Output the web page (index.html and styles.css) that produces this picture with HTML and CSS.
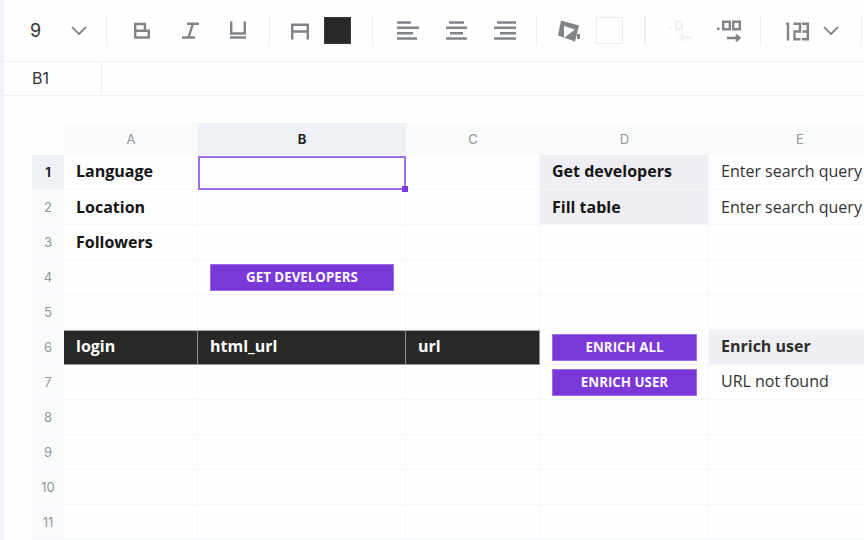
FILE: index.html
```html
<!DOCTYPE html>
<html lang="en">
<head>
<meta charset="utf-8">
<title>Spreadsheet</title>
<link rel="stylesheet" href="styles.css">
</head>
<body>
<main class="app">
  <header class="toolbar">
    <div class="group g-size">
      <span class="size">9</span>
      <svg class="chev" width="16" height="10" viewBox="0 0 16 10"><path d="M1 1l7 7 7-7"/></svg>
    </div>
    <div class="group g-format">
      <svg class="ico" width="20" height="20" viewBox="0 0 20 20"><path d="M3.2 3H13V9.7H3.2zM3.2 9.7H16.8V16.5H3.2z"/></svg>
      <svg class="ico" width="20" height="20" viewBox="0 0 20 20"><path d="M7 2.7H19M2 16.5H15M13 2.7L8.5 16.5"/></svg>
      <svg class="ico" width="20" height="20" viewBox="0 0 20 20"><path d="M3.2 0.5V12.5H16.8V0.5M2 16.5H18"/></svg>
    </div>
    <div class="group g-color">
      <svg class="ico" width="20" height="20" viewBox="0 0 20 20"><path d="M2.2 18.5V3.7H17.8V18.5M2.2 10.5H17.8"/></svg>
      <span class="swatch dark"></span>
    </div>
    <div class="group g-align">
      <svg class="ico" width="22" height="22" viewBox="0 0 22 22"><path d="M0 2.5H14M0 7.8H22M0 13.2H16M0 18.5H20"/></svg>
      <svg class="ico" width="22" height="22" viewBox="0 0 22 22"><path d="M3 2.5H18M0 7.8H21M4 13.2H17M0 18.5H21"/></svg>
      <svg class="ico" width="22" height="22" viewBox="0 0 22 22"><path d="M3 2.5H22M0 7.8H22M6 13.2H22M0 18.5H22"/></svg>
    </div>
    <div class="group g-fill">
      <svg class="ico solid" width="24" height="24" viewBox="0 0 24 24"><path d="M3 1.5L21 6.5L17 22.5L0 16.5z"/><path class="cut" d="M6 7L17 10.5L6 19z"/><path d="M19 15H22V20H19z"/></svg>
      <span class="swatch blank"></span>
    </div>
    <div class="group g-dec">
      <svg class="ico faint" width="24" height="24" viewBox="0 0 24 24"><path class="solid-dot" d="M0.5 8.5H3V11H0.5z"/><path d="M8.2 2.7H13.8V10.3H8.2zM23 18.5H12M15.5 15L12 18.5L15.5 22"/></svg>
      <svg class="ico" width="24" height="24" viewBox="0 0 24 24"><path class="solid-dot" d="M0 8.5H2.5V11H0z"/><path d="M6.2 2.7H12.8V10.3H6.2zM16.2 2.7H22.8V10.3H16.2zM10 19H22M19 16L22.5 19L19 22"/></svg>
    </div>
    <div class="group g-num">
      <svg class="ico" width="24" height="22" viewBox="0 0 24 22"><path d="M1 3.7H3.5M3 2.5V20.5M8.5 3.7H15V11.5H9.5V19.3H15.5M17 3.7H22.8V19.3H17M17.5 11.5H22.8"/></svg>
      <svg class="chev" width="16" height="10" viewBox="0 0 16 10"><path d="M1 1l7 7 7-7"/></svg>
    </div>
    <div class="group g-end"></div>
  </header>

  <div class="formula">
    <div class="namebox">B1</div>
    <div class="formula-input"></div>
  </div>

  <section class="sheet">
    <div class="grid">
      <div class="corner"></div>
      <div class="colh">A</div>
      <div class="colh active">B</div>
      <div class="colh">C</div>
      <div class="colh">D</div>
      <div class="colh">E</div>

      <div class="rowh active">1</div>
      <div class="cell b">Language</div>
      <div class="cell selected"><span class="handle"></span></div>
      <div class="cell"></div>
      <div class="cell b tint">Get developers</div>
      <div class="cell">Enter search query</div>

      <div class="rowh">2</div>
      <div class="cell b low">Location</div>
      <div class="cell"></div>
      <div class="cell"></div>
      <div class="cell b tint low">Fill table</div>
      <div class="cell low">Enter search query</div>

      <div class="rowh">3</div>
      <div class="cell b low">Followers</div>
      <div class="cell"></div>
      <div class="cell"></div>
      <div class="cell"></div>
      <div class="cell"></div>

      <div class="rowh">4</div>
      <div class="cell"></div>
      <div class="cell has-btn"><button class="btn">GET DEVELOPERS</button></div>
      <div class="cell"></div>
      <div class="cell"></div>
      <div class="cell"></div>

      <div class="rowh">5</div>
      <div class="cell"></div>
      <div class="cell"></div>
      <div class="cell"></div>
      <div class="cell"></div>
      <div class="cell"></div>

      <div class="rowh">6</div>
      <div class="cell b dark">login</div>
      <div class="cell b dark">html_url</div>
      <div class="cell b dark">url</div>
      <div class="cell has-btn"><button class="btn">ENRICH ALL</button></div>
      <div class="cell b tint soft">Enrich user</div>

      <div class="rowh">7</div>
      <div class="cell"></div>
      <div class="cell"></div>
      <div class="cell"></div>
      <div class="cell has-btn"><button class="btn">ENRICH USER</button></div>
      <div class="cell">URL not found</div>

      <div class="rowh">8</div>
      <div class="cell"></div><div class="cell"></div><div class="cell"></div><div class="cell"></div><div class="cell"></div>
      <div class="rowh">9</div>
      <div class="cell"></div><div class="cell"></div><div class="cell"></div><div class="cell"></div><div class="cell"></div>
      <div class="rowh">10</div>
      <div class="cell"></div><div class="cell"></div><div class="cell"></div><div class="cell"></div><div class="cell"></div>
      <div class="rowh">11</div>
      <div class="cell"></div><div class="cell"></div><div class="cell"></div><div class="cell"></div><div class="cell"></div>
    </div>
  </section>
</main>
</body>
</html>
```
FILE: styles.css
```css
* { box-sizing: border-box; }
html, body { margin: 0; height: 100%; }
body { background: #f0f3ff; overflow: hidden; font-family: Inter, "Liberation Sans", sans-serif; }
.app { margin-left: 4px; height: 540px; width: 860px; background: #fefefe; display: flex; flex-direction: column; overflow: hidden; }

.toolbar { height: 62px; flex: none; display: flex; border-bottom: 1px solid #eceefa; padding: 15px 0 15px; }
.group { display: flex; align-items: center; border-right: 1px solid #ebedf7; flex: none; height: 31px; }
.g-size { width: 103px; padding-left: 26px; justify-content: space-between; padding-right: 19px; }
.size { font-size: 18px; color: #333; }
.g-format { width: 163px; padding: 0 21px 0 25px; justify-content: space-between; }
.g-color { width: 103px; padding-left: 20px; gap: 14px; }
.g-align { width: 164px; padding: 0 20px 0 24px; justify-content: space-between; }
.g-fill { width: 109px; padding-left: 21px; gap: 14px; border-right-width: 2px; }
.g-dec { width: 115px; padding: 0 19px 0 22px; justify-content: space-between; }
.g-num { width: 101px; padding: 0 22px 0 24px; justify-content: space-between; }
.g-end { flex: 1; border: 0; }

svg { display: block; flex: none; }
.chev path { fill: none; stroke: #72767d; stroke-width: 1.7; }
.ico path { fill: none; stroke: #808489; stroke-width: 2.4; }
.ico.solid path { fill: #808489; stroke: none; }
.ico.solid path.cut { fill: #fefefe; }
.ico.faint path { stroke: #f0f1f6; }
.ico path.solid-dot { fill: #808489; stroke: none; }
.ico.faint path.solid-dot { fill: #f0f1f6; }

.swatch { width: 27px; height: 27px; display: block; }
.swatch.dark { background: #282826; border: 1px solid #3a3a3a; }
.swatch.blank { background: #fefefe; border: 1px solid #e9ebf6; }

.formula { height: 34px; flex: none; display: flex; border-bottom: 1px solid #eceefa; }
.namebox { width: 98px; border-right: 1px solid #eceefa; padding-left: 28px; font-size: 16px; line-height: 33px; color: #333; }
.formula-input { flex: 1; }

.sheet { padding: 27px 0 0 28px; flex: 1; min-height: 0; }
.grid { display: grid; grid-template-columns: 32px 134px 208px 134px 169px 182px; grid-template-rows: 32px repeat(11, 35px); width: 859px; }
.corner { background: #fefefe; }
.colh { background: #f9fafc; color: #939599; font-size: 13px; display: flex; align-items: center; justify-content: center; }
.colh.active { background: #eef1f5; color: #222; font-weight: 700; }
.rowh { background: #f9fafc; color: #939599; font-size: 13px; display: flex; align-items: center; justify-content: center; border-bottom: 1px solid #f4f6fb; }
.rowh.active { background: #eef1f5; color: #222; font-weight: 700; }

.cell { position: relative; font-family: "Open Sans", sans-serif; font-size: 16px; color: #333; padding: 0 12px 2px; display: flex; align-items: center; white-space: nowrap; border-right: 1px solid #f4f7fc; border-bottom: 1px solid #f4f7fc; }
.cell.low { padding-bottom: 0; }
.cell.has-btn { padding: 0 11px 0 12px; }
.cell.b { font-weight: 700; color: #151515; }
.cell.b.soft { color: #2e2e2e; }
.cell.tint { background: #eeeef4; }
.cell.dark { background: #282826; color: #fff; padding-bottom: 4px; border-right-color: #8f8f8f; border-top: 1px solid #aaa; border-bottom: 1px solid #9a9a9a; }
.cell.selected { border: 2px solid #9c6fe8; background: #fefefe; margin-top: 1px; z-index: 1; }
.handle { position: absolute; right: -4px; bottom: -4px; width: 6px; height: 6px; background: #7a3bdc; }

.btn { width: 100%; height: 27px; border: 1px solid #9c6fe8; background: #7a38d9; color: #fbf8ff; font-family: "Open Sans", sans-serif; font-weight: 700; font-size: 13.33px; padding: 0; }
```
